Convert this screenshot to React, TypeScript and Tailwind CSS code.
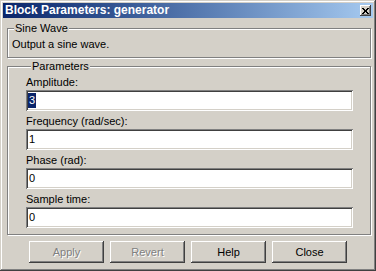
import React from 'react';

const raised =
  'shadow-[inset_-1px_-1px_#404040,inset_1px_1px_#ffffff,inset_-2px_-2px_#808080,inset_2px_2px_#d4d0c8]';
const sunken =
  'shadow-[inset_1px_1px_#808080,inset_-1px_-1px_#ffffff,inset_2px_2px_#404040,inset_-2px_-2px_#d4d0c8]';

function Field({ label, value, selected }: { label: string; value: string; selected?: boolean }) {
  return (
    <div className="flex flex-col">
      <span className="leading-[13px]">{label}</span>
      <div className={`mt-[1px] h-[21px] w-[327px] bg-white ${sunken} flex items-center pl-[2px]`}>
        {selected ? (
          <span className="bg-[#0a246a] text-white leading-[15px] px-[1px]">{value}</span>
        ) : (
          <span className="leading-[15px] px-[1px]">{value}</span>
        )}
      </div>
    </div>
  );
}

function Button({ label, disabled }: { label: string; disabled?: boolean }) {
  return (
    <button
      disabled={disabled}
      className={`w-[75px] h-[22px] bg-[#d4d0c8] ${raised} flex items-center justify-center ${
        disabled ? 'text-[#808080] [text-shadow:1px_1px_#ffffff]' : 'text-black'
      }`}
    >
      {label}
    </button>
  );
}

export default function App() {
  return (
    <div
      className="w-[376px] h-[271px] bg-[#d4d0c8] p-[3px] flex flex-col text-[11px] text-black shadow-[inset_-1px_-1px_#404040,inset_1px_1px_#d4d0c8,inset_-2px_-2px_#808080,inset_2px_2px_#ffffff]"
      style={{ fontFamily: '"Liberation Sans", Arial, sans-serif' }}
    >
      {/* Title bar */}
      <div className="h-[15px] flex items-center justify-between bg-linear-to-r from-[#0a246a] to-[#a6caf0] pl-[2px] pr-[2px]">
        <span className="text-white font-bold text-[12px] leading-[15px]">Block Parameters: generator</span>
        <div className={`w-[11px] h-[11px] bg-[#d4d0c8] ${raised} flex items-center justify-center`}>
          <svg width="7" height="6" viewBox="0 0 7 6">
            <path d="M0 0h2v1H0zM5 0h2v1H5zM1 1h2v1H1zM4 1h2v1H4zM2 2h3v2H2zM1 4h2v1H1zM4 4h2v1H4zM0 5h2v1H0zM5 5h2v1H5z" fill="#000" />
          </svg>
        </div>
      </div>

      {/* Sine Wave */}
      <fieldset className="mt-[3px] ml-[4px] mr-[2px] border border-[#808080] shadow-[inset_1px_1px_#ffffff,1px_1px_#ffffff] pl-[4px] pb-[6px]">
        <legend className="ml-[2px] px-[1px] leading-[14px] bg-[#d4d0c8]">Sine Wave</legend>
        <p className="leading-[13px] mt-[3px]">Output a sine wave.</p>
      </fieldset>

      {/* Parameters */}
      <fieldset className="mt-[1px] ml-[4px] mr-[2px] border border-[#808080] shadow-[inset_1px_1px_#ffffff,1px_1px_#ffffff] pl-[18px] pb-[6px]">
        <legend className="ml-[5px] px-[1px] leading-[14px] bg-[#d4d0c8]">Parameters</legend>
        <div className="flex flex-col gap-[4px] pt-[3px]">
          <Field label="Amplitude:" value="3" selected />
          <Field label="Frequency (rad/sec):" value="1" />
          <Field label="Phase (rad):" value="0" />
          <Field label="Sample time:" value="0" />
        </div>
      </fieldset>

      {/* Buttons */}
      <div className="flex gap-[6px] pl-[26px] mt-[6px]">
        <Button label="Apply" disabled />
        <Button label="Revert" disabled />
        <Button label="Help" />
        <Button label="Close" />
      </div>
    </div>
  );
}
